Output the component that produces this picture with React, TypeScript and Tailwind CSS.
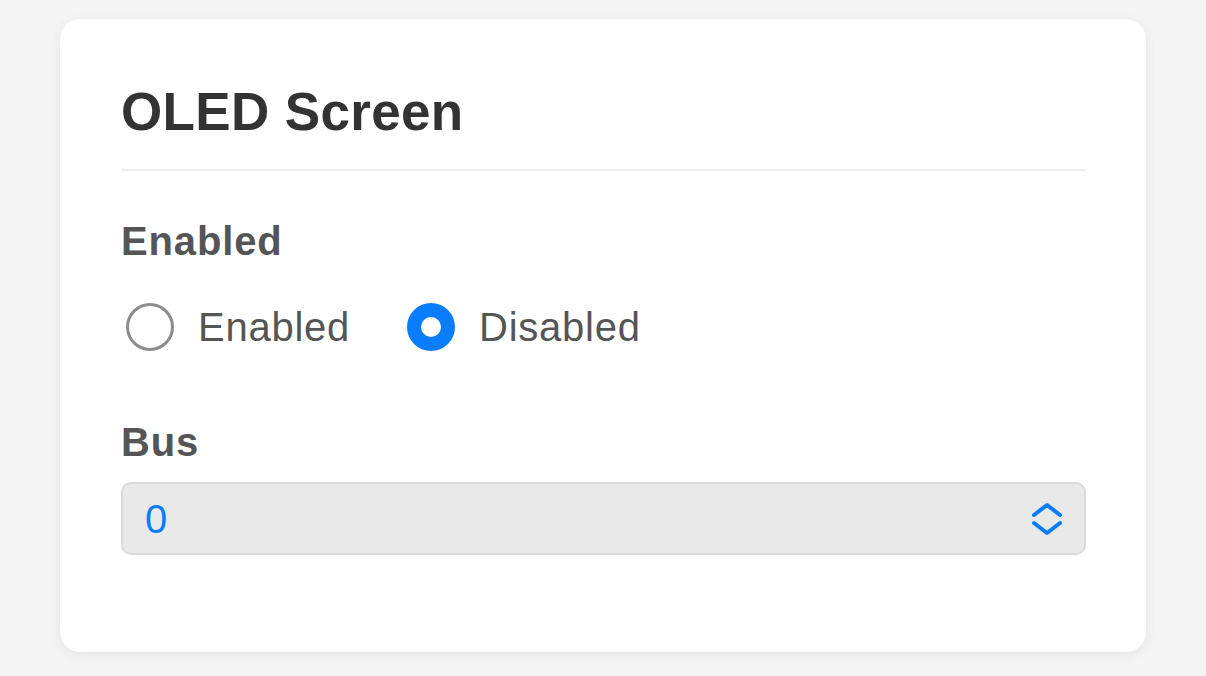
import React, { useState } from "react";

const Radio: React.FC<{ checked: boolean; label: string; onSelect: () => void }> = ({
  checked,
  label,
  onSelect,
}) => (
  <button type="button" onClick={onSelect} className="flex items-center gap-[24px]">
    {checked ? (
      <span className="flex h-[48px] w-[48px] items-center justify-center rounded-full bg-[#0a7cff]">
        <span className="h-[20px] w-[20px] rounded-full bg-white" />
      </span>
    ) : (
      <span className="h-[48px] w-[48px] rounded-full border-[3px] border-[#8c8c8c] bg-white" />
    )}
    <span className="text-[40px] leading-none tracking-[0.75px] text-[#555]">{label}</span>
  </button>
);

const App: React.FC = () => {
  const [enabled, setEnabled] = useState(false);

  return (
    <div
      className="min-h-screen w-full bg-[#f4f4f4] px-[60px] pt-[19px]"
      style={{ fontFamily: '"Liberation Sans", Arial, sans-serif' }}
    >
      <div className="w-[1086px] rounded-[20px] bg-white pb-[97px] pl-[61px] pr-[60px] pt-[66px] shadow-[0_2px_12px_rgba(0,0,0,0.07)]">
        <h1 className="text-[53px] font-bold leading-none tracking-[0.35px] text-[#333]">OLED Screen</h1>
        <div className="mt-[31px] h-[2px] bg-[#eeeeee]" />

        <div className="mt-[50px] text-[40px] font-bold leading-none tracking-[0.85px] text-[#555]">Enabled</div>
        <div className="mt-[42px] flex items-center gap-[57px] pl-[5px]">
          <Radio checked={enabled} label="Enabled" onSelect={() => setEnabled(true)} />
          <Radio checked={!enabled} label="Disabled" onSelect={() => setEnabled(false)} />
        </div>

        <div className="mt-[71px] text-[40px] font-bold leading-none tracking-[0.85px] text-[#555]">Bus</div>
        <div className="mt-[20px] flex h-[73px] items-center justify-between rounded-[10px] border-2 border-[#dadada] bg-[#e9e9e9] pl-[22px] pr-[21px]">
          <span className="text-[40px] leading-none text-[#0a7cff]">0</span>
          <svg width="32" height="34" viewBox="0 0 32 34" fill="none">
            <path
              d="M3 13 L16 3 L29 13 M3 21 L16 31 L29 21"
              stroke="#0a7cff"
              strokeWidth="4"
              strokeLinecap="round"
              strokeLinejoin="round"
            />
          </svg>
        </div>
      </div>
    </div>
  );
};

export default App;
